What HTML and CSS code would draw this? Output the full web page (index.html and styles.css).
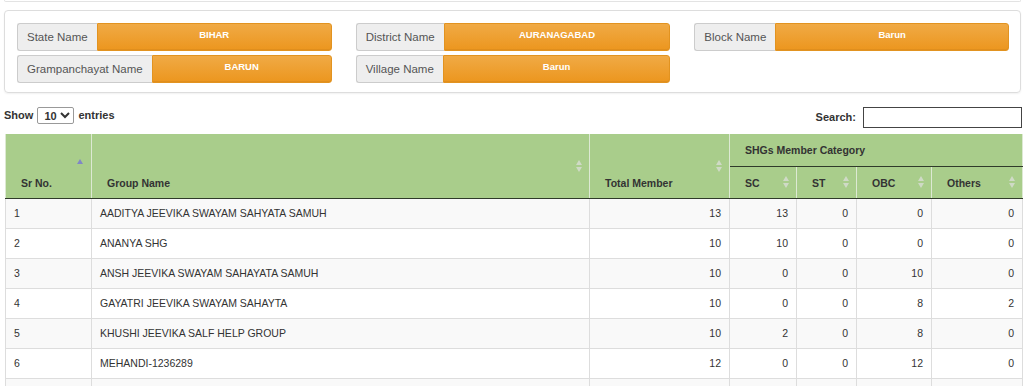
FILE: index.html
```html
<!DOCTYPE html>
<html lang="en">
<head>
    <meta charset="UTF-8">
    <meta name="viewport" content="width=device-width, initial-scale=1.0">
    <title>SHG Member Category Report</title>
    <link rel="stylesheet" href="styles.css">
</head>
<body>
    <div class="top-strip"></div>

    <div class="filter-panel">
        <div class="filter-col">
            <div class="input-group">
                <span class="addon">State Name</span>
                <span class="value">BIHAR</span>
            </div>
            <div class="input-group">
                <span class="addon">Grampanchayat Name</span>
                <span class="value">BARUN</span>
            </div>
        </div>
        <div class="filter-col">
            <div class="input-group">
                <span class="addon">District Name</span>
                <span class="value">AURANAGABAD</span>
            </div>
            <div class="input-group">
                <span class="addon">Village Name</span>
                <span class="value">Barun</span>
            </div>
        </div>
        <div class="filter-col">
            <div class="input-group">
                <span class="addon">Block Name</span>
                <span class="value">Barun</span>
            </div>
        </div>
    </div>

    <div class="table-wrapper">
        <div class="table-controls">
            <label class="length-label">Show
                <select class="length-select">
                    <option>10</option>
                    <option>25</option>
                    <option>50</option>
                </select>
                entries</label>
            <label class="search-label">Search: <input type="search" class="search-input"></label>
        </div>

        <table class="data-table">
            <colgroup>
                <col class="w-sr">
                <col class="w-group">
                <col class="w-total">
                <col class="w-sc">
                <col class="w-st">
                <col class="w-obc">
                <col class="w-others">
            </colgroup>
            <thead>
                <tr class="head-top">
                    <th rowspan="2" class="sorting-asc">Sr No.</th>
                    <th rowspan="2" class="sorting">Group Name</th>
                    <th rowspan="2" class="sorting">Total Member</th>
                    <th colspan="4" class="group-head">SHGs Member Category</th>
                </tr>
                <tr class="head-sub">
                    <th class="sorting">SC</th>
                    <th class="sorting">ST</th>
                    <th class="sorting">OBC</th>
                    <th class="sorting">Others</th>
                </tr>
            </thead>
            <tbody>
                <tr>
                    <td>1</td><td>AADITYA JEEVIKA SWAYAM SAHYATA SAMUH</td>
                    <td class="num">13</td><td class="num">13</td><td class="num">0</td><td class="num">0</td><td class="num">0</td>
                </tr>
                <tr>
                    <td>2</td><td>ANANYA SHG</td>
                    <td class="num">10</td><td class="num">10</td><td class="num">0</td><td class="num">0</td><td class="num">0</td>
                </tr>
                <tr>
                    <td>3</td><td>ANSH JEEVIKA SWAYAM SAHAYATA SAMUH</td>
                    <td class="num">10</td><td class="num">0</td><td class="num">0</td><td class="num">10</td><td class="num">0</td>
                </tr>
                <tr>
                    <td>4</td><td>GAYATRI JEEVIKA SWAYAM SAHAYTA</td>
                    <td class="num">10</td><td class="num">0</td><td class="num">0</td><td class="num">8</td><td class="num">2</td>
                </tr>
                <tr>
                    <td>5</td><td>KHUSHI JEEVIKA SALF HELP GROUP</td>
                    <td class="num">10</td><td class="num">2</td><td class="num">0</td><td class="num">8</td><td class="num">0</td>
                </tr>
                <tr>
                    <td>6</td><td>MEHANDI-1236289</td>
                    <td class="num">12</td><td class="num">0</td><td class="num">0</td><td class="num">12</td><td class="num">0</td>
                </tr>
                <tr>
                    <td>&nbsp;</td><td>&nbsp;</td>
                    <td class="num">&nbsp;</td><td class="num">&nbsp;</td><td class="num">&nbsp;</td><td class="num">&nbsp;</td><td class="num">&nbsp;</td>
                </tr>
            </tbody>
        </table>
    </div>
</body>
</html>
```

FILE: styles.css
```css
body {
    font-family: 'Liberation Sans', Arial, sans-serif;
    color: #333;
    margin: 0;
    padding: 0 2px 0 4px;
    background: #fff;
}

.top-strip {
    height: 1px;
    border: 1px solid #e3e3e3;
    border-top: none;
    border-radius: 0 0 4px 4px;
    margin-right: 1px;
}

.filter-panel {
    margin: 8px 1px 0 0;
    border: 1px solid #dddddd;
    border-radius: 4px;
    box-shadow: 0 1px 2px rgba(0, 0, 0, 0.06);
    padding: 12px 11px 9px 12px;
    display: grid;
    grid-template-columns: repeat(3, 1fr);
    column-gap: 24px;
}

.filter-col {
    display: flex;
    flex-direction: column;
    gap: 4px;
}

.input-group {
    display: flex;
    height: 28px;
}

.addon {
    background-color: #eeeeee;
    border: 1px solid #cccccc;
    border-right: none;
    border-radius: 3px 0 0 3px;
    padding: 0 9px;
    font-size: 11.5px;
    line-height: 26px;
    color: #555;
    white-space: nowrap;
}

.value {
    flex: 1;
    background: linear-gradient(#f0aa45, #ec961e);
    border: 1px solid #e29320;
    border-radius: 0 3px 3px 0;
    color: #fff;
    font-size: 9.5px;
    font-weight: bold;
    text-align: center;
    padding-top: 5px;
    line-height: 11px;
    box-shadow: inset 0 -1px 0 rgba(0, 0, 0, 0.05);
}

.table-wrapper {
    margin-top: 14px;
}

.table-controls {
    display: flex;
    justify-content: space-between;
    align-items: flex-start;
    font-size: 11px;
    font-weight: bold;
    color: #333;
    height: 21px;
}

.length-label {
    line-height: 17px;
}

.length-select {
    width: 37px;
    height: 17px;
    font-family: inherit;
    font-size: 11px;
    font-weight: bold;
    border: 1px solid #999;
    border-radius: 2px;
    padding: 0 0 0 2px;
    margin: 0 1px;
    background: #fff;
    color: #333;
    vertical-align: top;
}

.search-label {
    line-height: 21px;
}

.search-input {
    width: 159px;
    height: 21px;
    box-sizing: border-box;
    border: 1px solid #444;
    margin-left: 4px;
    vertical-align: top;
}

.data-table {
    width: 1017px;
    margin: 6px 0 0 1px;
    border-collapse: collapse;
    table-layout: fixed;
    font-size: 10.5px;
}

.w-sr { width: 86px; }
.w-group { width: 498px; }
.w-total { width: 140px; }
.w-sc { width: 67px; }
.w-st { width: 60px; }
.w-obc { width: 75px; }
.w-others { width: 91px; }

.data-table th {
    background-color: #a9cd8b;
    font-weight: bold;
    text-align: left;
    color: #333;
    padding: 0 18px 8px 15px;
    line-height: 13px;
    vertical-align: bottom;
    border-left: 1px solid #dde9d3;
    border-right: 1px solid #dde9d3;
    border-bottom: 1px solid #2f3a2a;
    position: relative;
}

.head-top { height: 32px; }
.head-sub { height: 32px; }

.data-table .group-head {
    vertical-align: middle;
    padding-top: 2px;
    padding-bottom: 0;
}

.head-sub th {
    vertical-align: middle;
    padding-top: 2px;
    padding-bottom: 0;
}

/* sort arrows, drawn with borders */
.sorting::before,
.sorting::after,
.sorting-asc::before {
    content: '';
    position: absolute;
    right: 7px;
    border-left: 3px solid transparent;
    border-right: 3px solid transparent;
}

.sorting::before {
    top: calc(50% - 6px);
    border-bottom: 5px solid #cfdac6;
}

.sorting::after {
    top: calc(50% + 1px);
    border-top: 5px solid #cfdac6;
}

.sorting-asc::before {
    top: calc(50% - 7px);
    right: 8px;
    border-bottom: 5px solid #8087c6;
}

.data-table td {
    border: 1px solid #dddddd;
    padding: 7px 8px;
    line-height: 15px;
    color: #333;
    white-space: nowrap;
    overflow: hidden;
}

.data-table tbody tr:nth-child(odd) td {
    background-color: #f9f9f9;
}

.data-table td.num {
    text-align: right;
}
```
